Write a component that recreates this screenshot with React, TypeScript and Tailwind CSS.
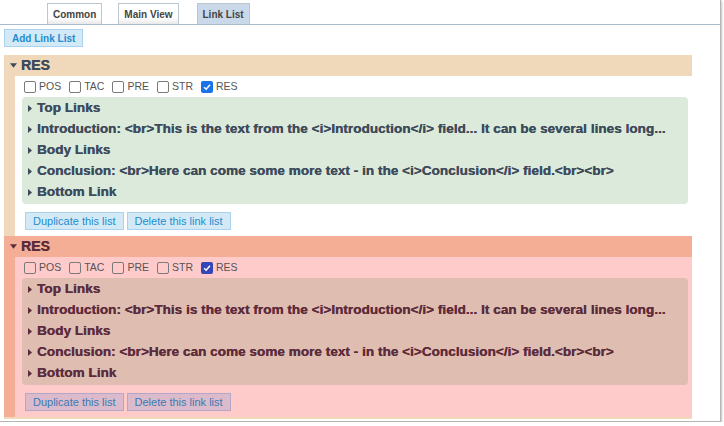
import React from "react";

type Theme = {
  header: string;
  body: string;
  panel: string;
  text: string;
  btn: string;
  check: string;
};

const tan: Theme = {
  header: "bg-[#f0d8bb]",
  body: "bg-white",
  panel: "bg-[#dbeadb]",
  text: "text-[#3e4b5b]",
  btn: "bg-[#d4e9f6] border-[#a8d2ee] text-[#1d8dcf]",
  check: "bg-[#1a73e8]",
};

const salmon: Theme = {
  header: "bg-[#f4ae96]",
  body: "bg-[#ffcaca]",
  panel: "bg-[#e0bdb1]",
  text: "text-[#5c2c3c]",
  btn: "bg-[#dbbacb] border-[#b4a8ca] text-[#3a7bb4]",
  check: "bg-[#3547b8]",
};

const rows = [
  "Top Links",
  "Introduction: <br>This is the text from the <i>Introduction</i> field... It can be several lines long...",
  "Body Links",
  "Conclusion: <br>Here can come some more text - in the <i>Conclusion</i> field.<br><br>",
  "Bottom Link",
];

const flags = ["POS", "TAC", "PRE", "STR", "RES"];

function Tab({ label, active }: { label: string; active?: boolean }) {
  return (
    <div
      className={`flex h-[21px] items-center border border-b-0 border-[#bcc6d0] px-[5px] text-[10px] font-bold text-[#444] ${
        active ? "bg-[#c9d9e9]" : "bg-gradient-to-b from-white from-70% to-[#e8e8e8]"
      }`}
    >
      {label}
    </div>
  );
}

function Checkbox({ checked, theme }: { checked?: boolean; theme: Theme }) {
  if (checked) {
    return (
      <span className={`flex h-[12px] w-[12px] items-center justify-center rounded-[2px] ${theme.check}`}>
        <svg viewBox="0 0 12 12" className="h-[10px] w-[10px]" fill="none" stroke="white" strokeWidth={1.8}>
          <path d="M2.5 6.2 L5 8.6 L9.6 3.4" />
        </svg>
      </span>
    );
  }
  return <span className="h-[12px] w-[12px] rounded-[2px] border border-[#7a7a7a]" />;
}

function LinkListBlock({ theme }: { theme: Theme }) {
  return (
    <div className={`ml-[4px] w-[688px] ${theme.header}`}>
      <div className={`flex h-[21px] items-center pl-[6px] text-[14px] font-bold [text-shadow:0.3px_0_0_currentColor] ${theme.text}`}>
        <svg viewBox="0 0 8 5" className="mr-[4px] h-[5px] w-[7px]" fill="currentColor">
          <path d="M0 0 H8 L4 5 Z" />
        </svg>
        RES
      </div>
      <div className="pl-[11px]">
        <div className={`${theme.body} pb-[6px] pr-[4px] pt-[4px]`}>
          <div className="flex h-[13px] items-center pl-[9px] text-[10.5px] text-[#555]">
            {flags.map((f) => (
              <label key={f} className="mr-[8px] flex items-center gap-[3px]">
                <Checkbox checked={f === "RES"} theme={theme} />
                <span>{f}</span>
              </label>
            ))}
          </div>
          <div className={`ml-[7px] mt-[4px] rounded-[4px] py-[1px] ${theme.panel}`}>
            {rows.map((r) => (
              <div
                key={r}
                className={`flex h-[21px] items-center pl-[6px] text-[13.5px] font-bold tracking-[0.05px] [text-shadow:0.3px_0_0_currentColor] ${theme.text}`}
              >
                <svg viewBox="0 0 4 7" className="mr-[5px] h-[7px] w-[4px]" fill="currentColor">
                  <path d="M0 0 L4 3.5 L0 7 Z" />
                </svg>
                <span className="whitespace-nowrap">{r}</span>
              </div>
            ))}
          </div>
          <div className="ml-[10px] mt-[8px] flex gap-[3px]">
            <button className={`h-[18px] border px-[7px] text-[11px] ${theme.btn}`}>Duplicate this list</button>
            <button className={`h-[18px] border px-[7px] text-[11px] ${theme.btn}`}>Delete this link list</button>
          </div>
        </div>
      </div>
    </div>
  );
}

export default function App() {
  return (
    <div
      className="h-[422px] w-[721px] overflow-hidden border-b border-r border-[#b5b5b5] bg-white shadow-[1px_1px_2px_rgba(0,0,0,0.25)]"
      style={{ fontFamily: '"Liberation Sans", Arial, sans-serif' }}
    >
      <div className="flex border-b border-[#a8bccb] pl-[47px] pt-[3px]">
        <Tab label="Common" />
        <div className="w-[16px]" />
        <Tab label="Main View" />
        <div className="w-[18px]" />
        <Tab label="Link List" active />
      </div>
      <div className="flex pl-[4px] pt-[4px]">
        <button className="h-[18px] border border-[#a8d2ee] bg-[#d4e9f6] px-[7px] text-[10px] font-bold text-[#1d8dcf]">
          Add Link List
        </button>
      </div>
      <div className="mt-[8px]">
        <LinkListBlock theme={tan} />
        <LinkListBlock theme={salmon} />
        <div className="ml-[4px] h-[2px] w-[688px] bg-[#f0d8bb]" />
      </div>
    </div>
  );
}
